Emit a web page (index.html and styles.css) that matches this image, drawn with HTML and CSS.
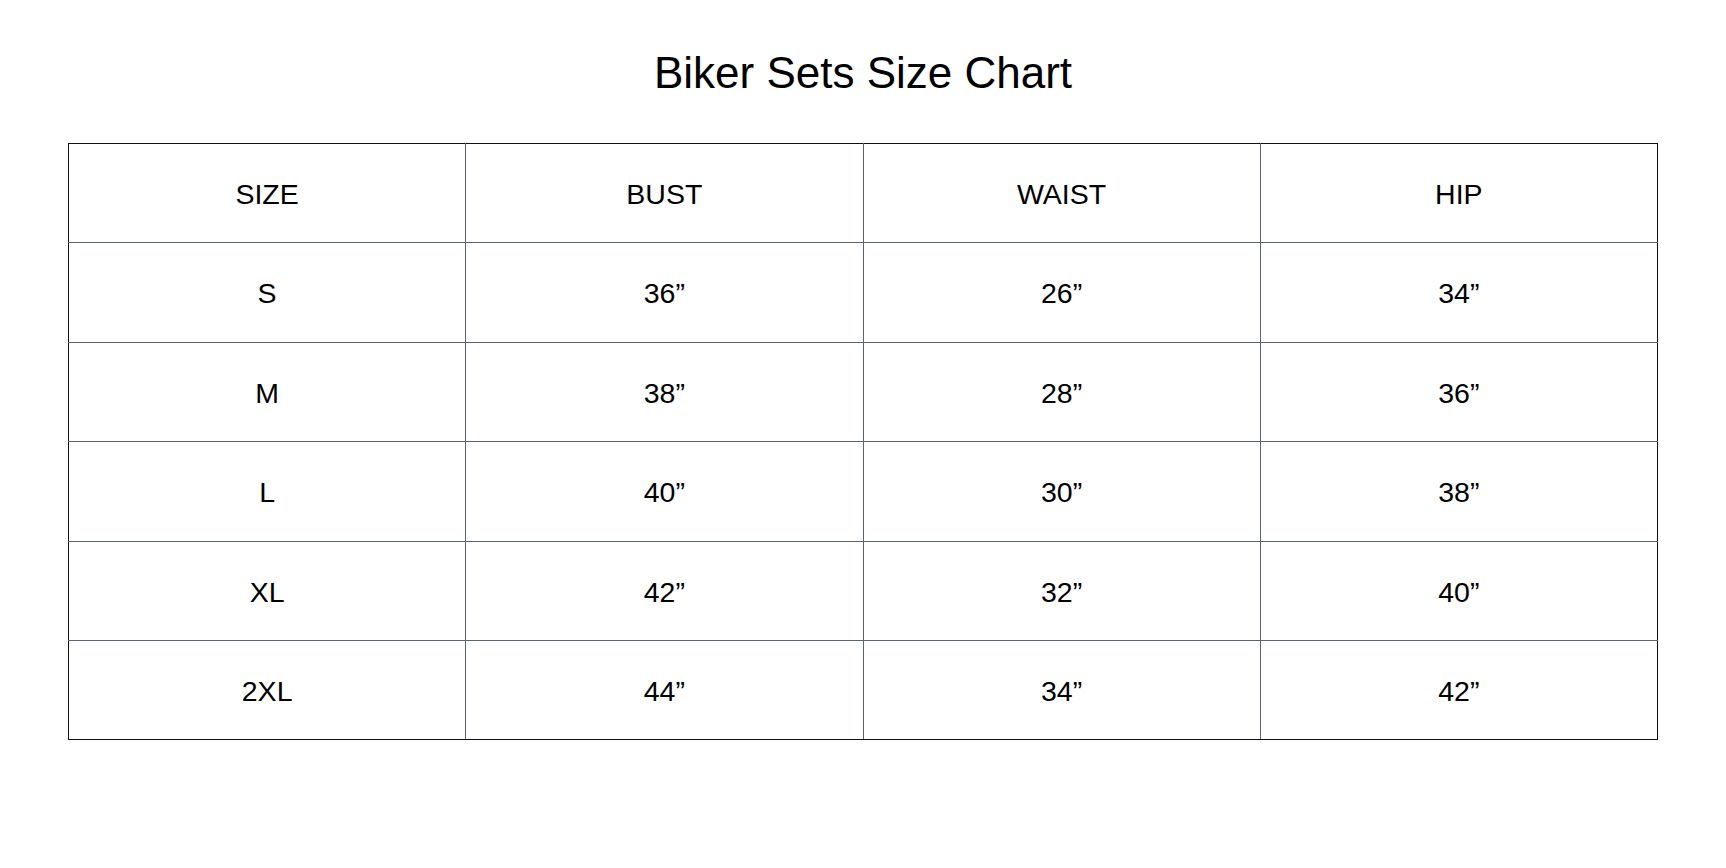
FILE: index.html
```html
<!DOCTYPE html>
<html lang="en">
<head>
<meta charset="utf-8">
<title>Biker Sets Size Chart</title>
<link rel="stylesheet" href="styles.css">
</head>
<body>
<main class="page">
  <h1 class="title">Biker Sets Size Chart</h1>
  <table class="chart">
    <thead>
      <tr><th>SIZE</th><th>BUST</th><th>WAIST</th><th>HIP</th></tr>
    </thead>
    <tbody>
      <tr><td>S</td><td>36”</td><td>26”</td><td>34”</td></tr>
      <tr><td>M</td><td>38”</td><td>28”</td><td>36”</td></tr>
      <tr><td>L</td><td>40”</td><td>30”</td><td>38”</td></tr>
      <tr><td>XL</td><td>42”</td><td>32”</td><td>40”</td></tr>
      <tr><td>2XL</td><td>44”</td><td>34”</td><td>42”</td></tr>
    </tbody>
  </table>
</main>
</body>
</html>
```
FILE: styles.css
```css
html, body {
  margin: 0;
  padding: 0;
  background: #ffffff;
}
body {
  font-family: "Liberation Sans", Arial, Helvetica, sans-serif;
  color: #000;
}
.page {
  padding: 51px 68px 0 68px;
  display: flex;
  flex-direction: column;
  align-items: stretch;
}
.title {
  margin: 0 0 48px 0;
  font-size: 44px;
  line-height: 44px;
  font-weight: 400;
  text-align: center;
}
.chart {
  width: 1590px;
  border-collapse: collapse;
  table-layout: fixed;
}
.chart th,
.chart td {
  border: 1px solid #5b6570;
  height: 96.9px;
  padding: 1.5px 0 0 0;
  text-align: center;
  vertical-align: middle;
  font-size: 28.5px;
  font-weight: 400;
  line-height: 32px;
}
.chart tr > :first-child { border-left-color: #111; }
.chart tr > :last-child { border-right-color: #111; }
.chart thead th { border-top-color: #111; }
.chart tbody tr:last-child td { border-bottom-color: #111; }
```
